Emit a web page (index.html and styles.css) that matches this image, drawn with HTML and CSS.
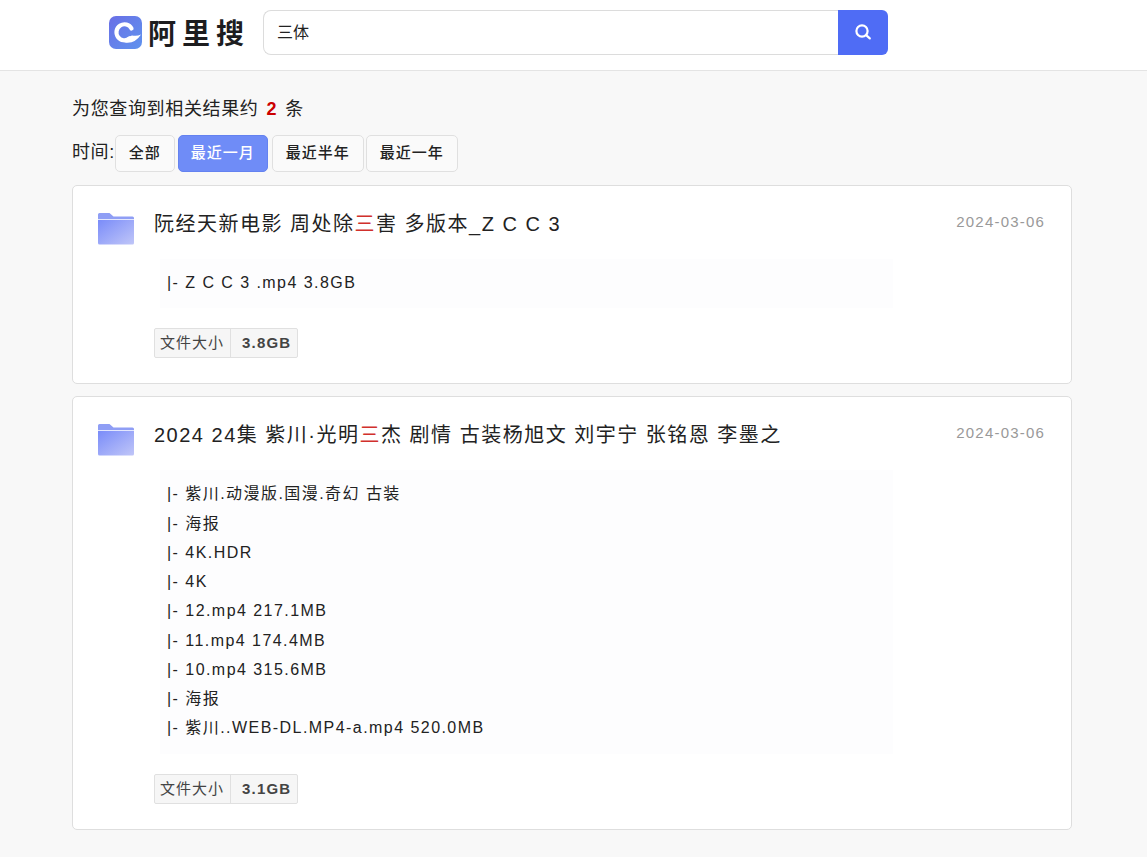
FILE: index.html
```html
<!DOCTYPE html>
<html lang="zh">
<head>
<meta charset="utf-8">
<title>阿里搜</title>
<link rel="stylesheet" href="styles.css">
</head>
<body>
<header class="topbar">
  <div class="logo">
    <svg class="logo-mark" viewBox="0 0 33 33" width="33" height="33">
      <defs><linearGradient id="lg" x1="0" y1="0" x2="1" y2="1"><stop offset="0" stop-color="#6a6fe6"/><stop offset="1" stop-color="#5f93ee"/></linearGradient></defs>
      <rect width="33" height="33" rx="7" fill="url(#lg)"/>
      <path d="M22.500 12.500A8 8 0 1 0 20.500 22.500" fill="none" stroke="#fff" stroke-width="4.200" stroke-linecap="round"/>
      <path d="M16 26.500Q26 28 32 18.500Q28 20.500 23 19.500L19 21z" fill="#fff"/>
    </svg>
    <span class="logo-text">阿里搜</span>
  </div>
  <form class="search">
    <div class="search-input">三体</div>
    <div class="search-btn">
      <svg viewBox="0 0 18 18" width="18" height="18" fill="none" stroke="#fff" stroke-width="2.200" stroke-linecap="round"><circle cx="8" cy="8" r="5.600"/><path d="M12.400 12.400l3.400 3"/></svg>
    </div>
  </form>
</header>
<main class="content">
  <p class="summary">为您查询到相关结果约<b class="count">2</b>条</p>
  <div class="filters">
    <span class="filter-label">时间:</span>
    <span class="chip">全部</span>
    <span class="chip chip-active">最近一月</span>
    <span class="chip">最近半年</span>
    <span class="chip">最近一年</span>
  </div>

  <article class="card">
    <svg class="folder" viewBox="0 0 38 33" width="38" height="33">
      <defs>
        <linearGradient id="f1" x1="0" y1="0" x2="1" y2="1"><stop offset="0" stop-color="#7a8cf9"/><stop offset="1" stop-color="#c0c6f8"/></linearGradient>
      </defs>
      <path d="M1 2.500A1.500 1.500 0 0 1 2.500 1h10l4 3.500H35.500A1.500 1.500 0 0 1 37 6v1.200H1z" fill="#8f9ef5"/>
      <path d="M1 8h36v23a1.500 1.500 0 0 1-1.500 1.500h-33A1.500 1.500 0 0 1 1 31z" fill="url(#f1)"/>
    </svg>
    <div class="card-main">
      <div class="card-head">
        <h2 class="card-title">阮经天新电影 周处除<em>三</em>害 多版本_Z C C 3</h2>
        <time class="card-date">2024-03-06</time>
      </div>
      <div class="files">
        <div class="file">|- Z C C 3 .mp4 3.8GB</div>
      </div>
      <div class="size-tag"><span class="size-label">文件大小</span><span class="size-value">3.8GB</span></div>
    </div>
  </article>

  <article class="card">
    <svg class="folder" viewBox="0 0 38 33" width="38" height="33">
      <path d="M1 2.500A1.500 1.500 0 0 1 2.500 1h10l4 3.500H35.500A1.500 1.500 0 0 1 37 6v1.200H1z" fill="#8f9ef5"/>
      <path d="M1 8h36v23a1.500 1.500 0 0 1-1.500 1.500h-33A1.500 1.500 0 0 1 1 31z" fill="url(#f1)"/>
    </svg>
    <div class="card-main">
      <div class="card-head">
        <h2 class="card-title">2024 24集 紫川·光明<em>三</em>杰 剧情 古装杨旭文 刘宇宁 张铭恩 李墨之</h2>
        <time class="card-date">2024-03-06</time>
      </div>
      <div class="files">
        <div class="file">|- 紫川.动漫版.国漫.奇幻 古装</div>
        <div class="file">|- 海报</div>
        <div class="file">|- 4K.HDR</div>
        <div class="file">|- 4K</div>
        <div class="file">|- 12.mp4 217.1MB</div>
        <div class="file">|- 11.mp4 174.4MB</div>
        <div class="file">|- 10.mp4 315.6MB</div>
        <div class="file">|- 海报</div>
        <div class="file">|- 紫川..WEB-DL.MP4-a.mp4 520.0MB</div>
      </div>
      <div class="size-tag"><span class="size-label">文件大小</span><span class="size-value">3.1GB</span></div>
    </div>
  </article>
</main>
</body>
</html>
```

FILE: styles.css
```css
* { box-sizing: border-box; }
html, body { margin: 0; padding: 0; }
body {
  background: #f8f8f8;
  color: #222;
  font-family: "Liberation Sans", "Noto Sans CJK SC", sans-serif;
  overflow: hidden;
  height: 857px;
}
.topbar {
  height: 71px;
  background: #fff;
  border-bottom: 1px solid #e4e4e4;
  display: flex;
  align-items: center;
  padding: 0 0 6px 109px;
}
.logo { display: flex; align-items: center; width: 154px; }
.logo-mark { flex: none; }
.logo-text {
  margin-left: 6px;
  font-size: 28px;
  font-weight: 700;
  letter-spacing: 6px;
  color: #1d1d1f;
  white-space: nowrap;
}
.search { display: flex; width: 625px; height: 45px; }
.search-input {
  flex: 1;
  background: #fff;
  border: 1px solid #dcdcdc;
  border-right: 0;
  border-radius: 8px 0 0 8px;
  padding-left: 13px;
  font-size: 16px;
  line-height: 43px;
  color: #222;
}
.search-btn {
  width: 50px;
  background: #4f6cf5;
  border-radius: 0 6px 6px 0;
  display: flex;
  align-items: center;
  justify-content: center;
}
.content { padding: 0 75px 0 72px; }
.summary {
  margin: 0;
  padding-top: 26px;
  font-size: 18px;
  line-height: 24px;
  color: #222;
  letter-spacing: .65px;
}
.count { color: #c00; margin: 0 8px; }
.filters { display: flex; align-items: center; margin-top: 14px; height: 37px; }
.filter-label { font-size: 18px; margin-top: -8px; letter-spacing: .6px; }
.chip {
  height: 37px;
  line-height: 33px;
  padding: 0 13px;
  margin-right: 2px;
  background: #fafafa;
  border: 1px solid #e0e0e0;
  border-radius: 5px;
  font-size: 15px;
  font-weight: 500;
  color: #222;
  letter-spacing: 1px;
}
.chip-active { background: #6f8cf7; border-color: #6482f0; color: #fff; padding: 0 12px; margin: 0 4px 0 1px; }
.card {
  display: flex;
  background: #fff;
  border: 1px solid #dedede;
  border-radius: 5px;
  margin-top: 12px;
  padding: 24px 26px 25px 24px;
}
.filters + .card { margin-top: 13px; }
.folder { flex: none; margin-top: 2px; margin-right: 19px; }
.card-main { flex: 1; min-width: 0; }
.card-head { display: flex; justify-content: space-between; align-items: flex-start; }
.card-title {
  margin: 0;
  font-size: 20px;
  font-weight: 400;
  line-height: 28px;
  letter-spacing: 1.500px;
  color: #222;
  white-space: pre-wrap;
}
.card-title em { font-style: normal; color: #d1302c; }
.card-date { font-size: 15px; color: #999; letter-spacing: 1.200px; line-height: 24px; }
.files {
  width: 733px;
  margin: 21px 0 0 6px;
  padding: 9px 0 11px 7px;
  background: #fdfdfe;
}
.file {
  font-size: 16px;
  line-height: 29.250px;
  color: #222;
  letter-spacing: 1.450px;
  white-space: nowrap;
}
.size-tag {
  display: inline-flex;
  margin-top: 20px;
  height: 30px;
  background: #f6f6f6;
  border: 1px solid #e0e0e0;
  border-radius: 2px;
  font-size: 15px;
  line-height: 28px;
  color: #444;
  vertical-align: top;
}
.size-label { padding: 0 6px 0 5px; border-right: 1px solid #e0e0e0; letter-spacing: 1px; }
.size-value { padding: 0 6px 0 11px; font-weight: 700; letter-spacing: 1.200px; }
```
